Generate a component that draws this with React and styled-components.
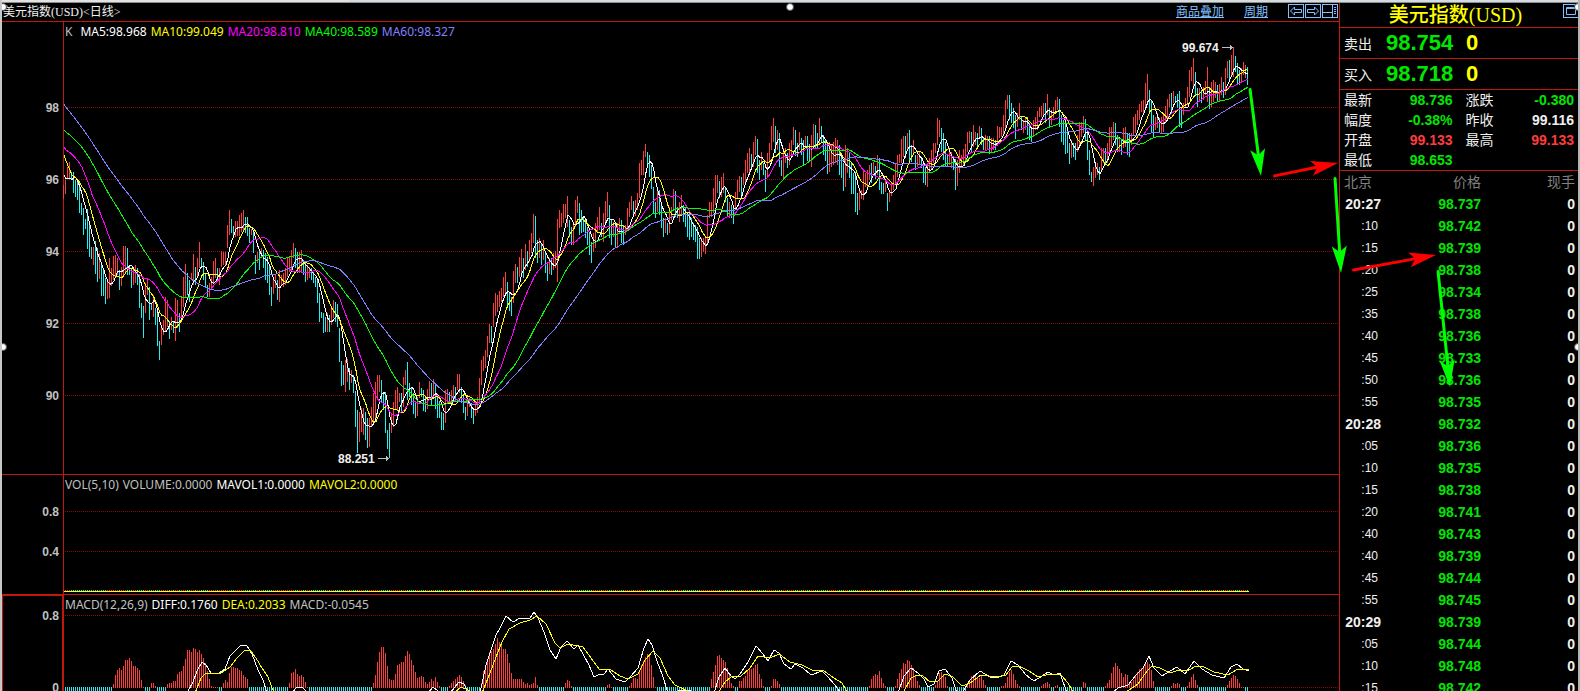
import React from 'react';
import styled, { createGlobalStyle } from 'styled-components';

const GlobalStyle = createGlobalStyle`
  * {
    box-sizing: border-box;
  }

  body {
    margin: 0;
    background: #000;
    overflow: hidden;
  }
`;

const theme = {
  line: '#c01810',
  grid: '#8c0c0c',
  up: '#ff3c3c',
  down: '#20f0f0',
  green: '#00e600',
  red: '#ff3c3c',
  white: '#f0f0f0',
  gray: '#c0c0c0',
  yellow: '#ffff00',
  magenta: '#ff00ff',
  lime: '#00ff00',
  violet: '#8080ff',
  link: '#80c0ff',
};

const cjk = '"Liberation Sans", "Noto Sans CJK SC", sans-serif';

/* ---------- data ---------- */

// Each row: x of the first bar, then "high-low" levels, one bar every 2px.
const CANDLES = [
  [63, '185-199 180-194 167-178 162-178 172-180 172-193 180-197 182-200 183-213 203-215'],
  [83, '208-235 219-229 209-249 225-257 247-259 247-265 241-274 248-282 253-279 265-296'],
  [103, '268-296 278-304 280-299 258-298 268-286 256-280 255-277 258-275 270-290 267-286'],
  [123, '246-275 246-272 248-275 266-275 268-288 267-285 265-283 268-285 275-308 303-318'],
  [143, '306-338 283-313 278-295 287-320 303-310 295-317 308-325 313-346 341-360 328-345'],
  [163, '320-335 297-332 300-327 321-339 317-330 322-333 298-341 300-328 313-332 298-317'],
  [183, '277-307 264-298 273-295 280-302 273-280 254-285 267-285 258-277 242-268 258-268'],
  [203, '262-280 273-287 285-297 283-297 277-288 261-283 258-278 268-280 268-285 251-267'],
  [223, '252-265 252-265 225-248 210-235 219-233 226-237 221-237 221-236 215-236 213-232'],
  [243, '210-230 217-233 217-236 228-243 229-235 232-253 255-274 252-263 250-270 248-258'],
  [263, '250-268 253-280 257-283 265-295 287-306 278-294 275-288 280-300 270-302 275-285'],
  [283, '273-287 268-285 258-277 257-272 250-270 243-258 248-268 252-273 252-273 250-273'],
  [303, '260-275 263-282 265-280 267-278 268-280 272-283 277-287 280-303 293-322 312-318'],
  [323, '313-333 317-332 313-332 315-332 308-325 300-318 302-322 304-327 328-362 361-386'],
  [343, '365-385 360-392 359-382 368-390 370-383 375-393 391-427 410-453 412-442 408-432'],
  [363, '408-435 412-440 418-448 418-447 407-427 393-422 382-420 375-398 375-392 380-402'],
  [383, '392-410 392-433 430-449 423-458 415-433 402-427 390-410 387-410 393-402 393-413'],
  [403, '377-407 370-385 362-400 383-397 387-405 393-414 403-418 397-416 382-398 388-397'],
  [423, '390-411 397-412 389-409 381-400 383-405 379-397 385-409 397-418 401-418 412-430'],
  [443, '413-430 390-423 389-403 392-402 390-403 385-397 387-400 374-390 374-393 387-403'],
  [463, '395-413 407-420 397-416 398-407 403-418 408-424 405-416 397-413 378-403 360-385'],
  [483, '356-371 350-368 336-357 324-343 326-343 303-327 293-316 295-312 291-307 288-302'],
  [503, '277-297 272-293 282-308 293-311 297-316 271-303 264-283 267-283 257-277 249-273'],
  [523, '258-278 244-270 251-267 240-262 233-253 214-243 216-258 240-263 238-258 243-265'],
  [543, '240-260 253-273 263-281 258-274 258-275 253-270 251-268 219-282 210-228 213-227'],
  [563, '204-223 204-218 196-227 220-237 227-245 225-245 200-227 196-213 203-235 210-233'],
  [583, '216-232 218-238 227-245 232-255 242-263 233-252 223-248 217-233 207-230 223-237'],
  [603, '213-242 201-222 192-217 205-238 220-245 222-237 225-247 223-248 218-233 220-243'],
  [623, '225-245 225-235 208-230 202-217 196-210 201-217 200-216 193-210 163-198 160-175'],
  [643, '151-175 144-157 152-168 155-177 165-189 187-213 202-218 190-212 190-215 203-228'],
  [663, '218-237 218-233 223-235 207-233 207-220 189-210 191-217 207-218 202-222 195-215'],
  [683, '205-222 207-227 213-237 213-240 218-237 223-240 225-242 227-259 238-259 238-257'],
  [703, '238-252 238-254 215-245 202-218 202-217 188-213 175-205 175-193 181-198 177-197'],
  [723, '173-193 187-202 198-217 202-218 205-218 208-224 192-210 180-198 176-192 177-198'],
  [743, '173-185 160-183 153-173 148-172 154-168 142-167 136-155 139-173 160-180 152-170'],
  [763, '163-175 170-192 153-178 143-163 126-150 118-142 126-153 130-150 133-167 160-176'],
  [783, '148-179 148-163 153-168 143-165 140-158 127-145 130-156 143-157 132-150 138-155'],
  [803, '140-165 136-148 136-161 144-162 135-167 124-148 125-148 133-148 118-143 126-143'],
  [823, '135-155 139-161 143-174 142-172 145-167 142-165 138-163 140-165 145-175 157-178'],
  [843, '163-191 145-187 148-173 153-178 162-194 173-194 172-212 193-215 188-210 190-199'],
  [863, '170-200 173-187 170-187 165-180 163-183 162-173 166-179 155-175 158-190 182-194'],
  [883, '183-194 180-192 193-211 191-202 183-196 175-190 163-185 155-177 154-163 139-163'],
  [903, '136-157 136-158 133-150 130-160 145-162 140-155 155-170 155-167 152-165 158-168'],
  [923, '162-183 167-185 163-187 158-173 150-170 143-163 143-153 118-145 120-137 128-152'],
  [943, '133-160 142-167 155-166 152-165 152-168 157-170 159-190 160-186 150-173 155-168'],
  [963, '149-165 144-160 132-152 131-143 132-152 125-147 132-145 133-147 126-138 128-145'],
  [983, '137-150 135-150 136-150 136-154 138-152 138-150 140-150 126-146 127-138 127-137'],
  [1003, '115-135 100-130 95-109 95-120 103-123 108-128 115-139 113-127 103-120 117-130'],
  [1023, '120-133 118-130 117-135 123-140 127-142 120-137 117-130 111-130 107-117 106-117'],
  [1043, '103-115 103-123 94-115 108-127 110-125 107-118 100-113 97-110 99-127 115-142'],
  [1063, '120-145 123-154 130-153 143-164 140-158 143-157 143-160 135-152 122-145 122-137'],
  [1083, '116-133 119-140 130-160 150-175 172-182 167-186 167-178 163-175 167-180 148-170'],
  [1103, '148-163 148-165 143-163 127-152 127-147 122-140 123-145 135-152 138-152 140-155'],
  [1123, '128-148 127-147 133-155 133-157 133-145 117-135 114-133 110-125 104-120 101-112'],
  [1143, '100-113 83-108 74-100 90-112 100-132 115-137 117-130 113-128 118-133 117-133'],
  [1163, '115-132 106-123 99-117 94-107 93-113 91-103 96-103 94-108 91-127 107-128'],
  [1183, '103-115 98-108 87-105 70-97 67-81 58-87 72-95 88-107 88-102 90-103'],
  [1203, '87-100 81-95 67-102 88-109 82-107 80-102 82-98 85-102 84-102 77-95'],
  [1223, '82-98 68-95 61-78 60-80 55-75 47-77 56-72 63-85 70-85 68-82'],
  [1243, '62-75 65-78 67-85'],
];

const bars = CANDLES.flatMap(([start, row]) =>
  row.split(' ').map((pair, i) => {
    const [high, low] = pair.split('-').map(Number);
    return { x: start + i * 2, high, low, mid: (high + low) / 2 };
  })
);

bars.forEach((bar, i) => {
  const prev = i ? bars[i - 1].mid : bar.mid + 1;
  bar.up = bar.mid <= prev + (i % 3 === 0 ? 3 : 0);
});

// Levels before the first visible bar, needed by the long averages.
const history = [
  ...Array.from({ length: 20 }, (_, i) => 10 + i * 4),
  ...Array.from({ length: 20 }, (_, i) => 106 + i / 2),
  ...Array(10).fill(142),
  ...Array(5).fill(125),
  ...Array(5).fill(171),
];

const closes = [...history, ...bars.map((bar) => bar.mid)];

const average = (size) =>
  bars
    .map((bar, i) => {
      const end = history.length + i + 1;
      const sum = closes.slice(end - size, end).reduce((a, b) => a + b, 0);
      return `${bar.x + 1},${Math.round((sum / size) * 10) / 10}`;
    })
    .join(' ');

const AVERAGES = [
  { name: 'MA5', value: '98.968', size: 5, color: '#fff' },
  { name: 'MA10', value: '99.049', size: 10, color: theme.yellow },
  { name: 'MA20', value: '98.810', size: 20, color: theme.magenta },
  { name: 'MA40', value: '98.589', size: 40, color: theme.lime },
  { name: 'MA60', value: '98.327', size: 60, color: theme.violet },
];

// Positive runs of the MACD histogram: first x, then heights.
const HISTOGRAM = [
  [113, [3, 12, 17, 19, 17, 21, 27, 27, 29, 26, 21, 21, 19, 17, 7, 0]],
  [151, [4, 4, 1]],
  [167, [3, 4, 4, 6, 6, 13, 15, 16, 21, 28, 37, 37, 35, 39, 38, 35, 37, 33, 29, 24, 16, 8, 1, 0, 0, 0]],
  [223, [4, 7, 5, 14, 20, 20, 19, 19, 17, 16, 12, 10, 8]],
  [289, [4, 14, 15, 18, 13, 11, 12, 10, 5, 0]],
  [373, [4, 12, 25, 35, 40, 40, 34, 21, 8, 7, 7, 13, 22, 23, 25, 25, 31, 36, 33, 27, 22, 15, 9, 10, 11, 10, 5, 3, 5, 8, 6, 10, 5, 1]],
  [449, [1, 4, 6, 8, 10, 12, 10, 6, 2]],
  [481, [4, 16, 21, 28, 35, 36, 38, 43, 49, 45, 42, 38, 38, 33, 24, 14, 8, 8, 8, 8, 8, 5, 3, 4, 2, 3, 4, 10, 2]],
  [565, [4, 7, 6, 1]],
  [607, [2, 3, 0]],
  [629, [1, 4, 9, 9, 8, 15, 22, 26, 30, 33, 32, 22, 10, 0]],
  [711, [8, 15, 22, 31, 32, 29, 27, 25, 19, 12, 4, 1]],
  [739, [6, 6, 9, 11, 16, 18, 18, 19, 22, 23, 13, 8, 1]],
  [771, [1, 8, 8, 6, 3]],
  [869, [1, 8, 11, 13, 12, 16, 9, 4, 1]],
  [895, [1, 8, 14, 18, 24, 23, 27, 26, 22, 19, 11, 6, 2]],
  [935, [2, 6, 14, 15, 13, 10, 1]],
  [967, [3, 7, 11, 12, 13, 10, 9, 11, 7, 2]],
  [1001, [1, 1, 4, 10, 15, 17, 13, 7, 3, 1]],
  [1041, [1, 3, 4, 5, 3]],
  [1055, [1, 2]],
  [1083, [5, 4]],
  [1105, [1, 4, 7, 14, 20, 24, 21, 18, 14, 10, 13, 12, 5, 5, 7, 12, 15, 18, 19, 20, 23, 25, 23, 17, 6]],
  [1171, [1, 4, 3, 4, 3]],
  [1187, [1, 5, 10, 13, 7, 2]],
  [1227, [2, 6, 9, 12, 11, 8, 4, 0, 0]],
];

const positive = new Map(
  HISTOGRAM.flatMap(([start, heights]) => heights.map((h, i) => [start + i * 2, h]))
);

const DIFF = [
  '187,693 193,682 197,671 202,662 206,665 211,673 219,673 225,669 230,656 236,650 241,645 247,646 252,654 258,670 263,680 267,693',
  '292,693 296,688 302,687 308,693',
  '428,693 433,687 437,690 440,693',
  '450,693 459,682 464,684 468,693',
  '480,693 486,665 491,650 496,635 500,628 506,616 513,622 520,618 530,618 534,612 538,618 544,632 550,650 556,659 561,647 567,641 574,649 578,645 584,656 589,665 594,677 600,674 604,674 608,669 616,679 625,682 631,676 638,668 644,648 648,639 652,645 657,661 662,674 668,693',
  '675,692 682,690 690,690 694,693',
  '714,693 719,677 725,668 731,676 735,679 740,674 748,662 756,646 763,654 768,661 774,650 779,653 784,664 791,669 795,664 803,668 811,675 822,671 828,677 834,684 841,693',
  '898,693 904,676 911,668 918,673 924,679 928,687 934,684 939,671 945,669 952,678 957,693',
  '962,693 970,680 980,671 990,677 996,678 1004,675 1011,661 1018,665 1026,675 1034,681 1042,676 1048,672 1054,675 1060,673 1067,693',
  '1113,692 1118,688 1128,685 1136,675 1143,668 1149,656 1154,668 1162,676 1170,671 1177,667 1185,674 1194,661 1202,669 1212,675 1224,678 1231,667 1237,664 1243,669 1249,671',
];

const DEA = [
  '195,693 201,678 206,673 221,673 230,667 237,658 245,650 250,650 256,658 262,668 268,677 274,693',
  '454,693 461,687 468,690 474,693',
  '482,693 490,673 496,657 502,642 509,629 520,623 530,620 537,616 546,624 555,643 560,648 568,644 583,647 591,658 599,669 611,670 620,676 628,679 638,674 645,660 653,651 660,658 668,676 675,685 690,692',
  '718,693 725,682 731,677 741,676 750,668 758,656 770,658 779,654 790,662 802,665 812,670 824,671 834,678 842,683 848,693',
  '903,693 911,678 917,675 923,676 930,682 938,681 945,674 953,677 962,686 970,683 981,675 997,677 1006,675 1012,667 1019,666 1029,671 1038,677 1050,674 1061,675 1068,683 1074,693',
  '1126,692 1138,684 1147,671 1152,666 1160,668 1170,673 1179,670 1189,670 1196,666 1204,667 1214,672 1228,675 1236,670 1249,669',
];

const QUOTES = [
  ['最新', '98.736', 'green', '涨跌', '-0.380', 'green'],
  ['幅度', '-0.38%', 'green', '昨收', '99.116', 'white'],
  ['开盘', '99.133', 'red', '最高', '99.133', 'red'],
  ['最低', '98.653', 'green'],
];

const TICKS = [
  ['20:27', '98.737'],
  [':10', '98.742'],
  [':15', '98.739'],
  [':20', '98.738'],
  [':25', '98.734'],
  [':35', '98.738'],
  [':40', '98.736'],
  [':45', '98.733'],
  [':50', '98.736'],
  [':55', '98.735'],
  ['20:28', '98.732'],
  [':05', '98.736'],
  [':10', '98.735'],
  [':15', '98.738'],
  [':20', '98.741'],
  [':40', '98.743'],
  [':40', '98.739'],
  [':45', '98.744'],
  [':55', '98.745'],
  ['20:29', '98.739'],
  [':05', '98.744'],
  [':10', '98.748'],
  [':15', '98.742'],
];

/* ---------- layout ---------- */

const Window = styled.div`
  position: relative;
  display: flex;
  flex-direction: column;
  height: 100vh;
  overflow: hidden;
  background: #000;
  color: ${theme.white};
  font-family: ${cjk};
  border-left: 2px solid #c8c8c8;
  border-right: 2px solid #b4b4b4;
`;

const TopEdge = styled.div`
  flex: none;
  height: 3px;
  background: linear-gradient(90deg, #e2e2e2 0 22%, #d4dce2 22% 100%);
  border-bottom: 1px solid #8c8c8c;
`;

const Workspace = styled.div`
  flex: 1;
  min-height: 0;
  display: grid;
  grid-template-columns: minmax(0, 1fr) 239px;
`;

const Charts = styled.main`
  display: flex;
  flex-direction: column;
  min-height: 0;
`;

const TitleBar = styled.header`
  flex: none;
  display: flex;
  align-items: center;
  height: 19px;
  padding: 0 1px;
  border-bottom: 1px solid ${theme.line};
  font-family: 'Liberation Serif', 'Noto Sans CJK SC', serif;
  font-size: 12px;
  line-height: 18px;
`;

const ChartName = styled.h1`
  flex: 1;
  margin: 0;
  font-size: 12px;
  font-weight: 400;
`;

const BarLink = styled.a`
  margin-right: 20px;
  color: ${theme.link};
  text-decoration: underline;
`;

const IconButtons = styled.div`
  display: flex;
  gap: 1px;
  padding-bottom: 2px;
`;

const IconButton = styled.button`
  display: block;
  width: 16px;
  height: 14px;
  padding: 0;
  border: 1px solid ${theme.link};
  background: none;
  color: ${theme.link};

  svg {
    display: block;
  }
`;

const Panel = styled.section`
  display: grid;
  grid-template-columns: 62px minmax(0, 1fr);
  flex: ${({ $height }) => ($height ? `0 0 ${$height}px` : '1 1 0')};
  min-height: 0;
  border-bottom: ${({ $height }) => ($height ? `1px solid ${theme.line}` : 0)};
`;

const Axis = styled.svg`
  display: block;
  width: 100%;
  height: 100%;
  border: solid ${theme.line};
  border-width: ${({ $active }) => ($active ? '1px 2px 0 1px' : '0 1px 0 0')};
`;

const Plot = styled.div`
  display: flex;
  flex-direction: column;
  min-height: 0;
`;

const Legend = styled.div`
  display: flex;
  flex: none;
  gap: 4px;
  height: 18px;
  padding-left: 1px;
  font-family: 'Noto Sans', sans-serif;
  font-size: 12px;
  line-height: 19px;
  white-space: nowrap;
`;

const LegendItem = styled.span`
  color: ${({ $color }) => $color || theme.gray};
  margin-right: ${({ $wide }) => ($wide ? '4px' : 0)};
`;

const Canvas = styled.svg`
  display: block;
  flex: 1;
  width: 100%;
  min-height: 0;
  overflow: visible;
`;

const Label = styled.text`
  fill: ${({ $bright }) => ($bright ? theme.white : theme.gray)};
  font-family: 'Liberation Sans', sans-serif;
  font-size: 12px;
  font-weight: 700;
`;

const Sidebar = styled.aside`
  min-height: 0;
  overflow: hidden;
  border-left: 1px solid ${theme.line};
`;

const SideTitle = styled.header`
  display: grid;
  grid-template-columns: 8px 1fr 15px;
  align-items: start;
  height: 25px;
  padding-top: 1px;
  border-bottom: 1px solid ${theme.line};
`;

const Symbol = styled.h2`
  grid-column: 2;
  margin: 0;
  color: ${theme.yellow};
  font-family: 'Liberation Serif', 'Noto Sans CJK SC', serif;
  font-size: 20px;
  font-weight: 500;
  line-height: 22px;
  text-align: center;
  white-space: nowrap;
`;

const PriceRow = styled.div`
  display: grid;
  grid-template-columns: 42px 80px 1fr;
  align-items: center;
  height: 31px;
  padding-left: 4px;
  border-bottom: 1px solid ${theme.line};
  font-size: 14px;
`;

const BigNumber = styled.strong`
  color: ${({ $color }) => theme[$color]};
  font-size: 22px;
  line-height: 30px;
`;

const Quotes = styled.dl`
  display: grid;
  grid-template-columns: 28px 1fr 41px 1fr;
  margin: 0;
  padding: 0 4px;
  border-bottom: 1px solid ${theme.line};
  font-size: 14px;
  line-height: 20px;
`;

const QuoteLabel = styled.dt`
  height: 20px;
  padding-left: ${({ $second }) => ($second ? '13px' : 0)};
`;

const QuoteValue = styled.dd`
  height: 20px;
  margin: 0;
  color: ${({ $color }) => theme[$color]};
  font-weight: 700;
  text-align: right;
`;

const Tape = styled.table`
  width: 100%;
  border-collapse: collapse;
  table-layout: fixed;
  font-size: 14px;
  line-height: 22px;

  tr {
    height: 22px;
  }

  th {
    padding: 0;
    color: #808080;
    font-weight: 400;
    text-align: right;
  }

  td {
    height: 22px;
    padding: 0;
    font-weight: 700;
    text-align: right;
  }

  th:first-child {
    width: 42px;
    padding-left: 4px;
    text-align: left;
  }

  th:last-child,
  td:last-child {
    width: 97px;
    padding-right: 3px;
  }
`;

const Time = styled.td`
  && {
    padding-right: ${({ $minor }) => ($minor ? '4px' : '1px')};
    font-size: ${({ $minor }) => ($minor ? '12px' : '14px')};
    font-weight: ${({ $minor }) => ($minor ? 400 : 700)};
  }
`;

const TickPrice = styled.td`
  color: ${theme.green};
`;

const Overlay = styled.svg`
  position: absolute;
  inset: 0;
  width: 100%;
  height: 100%;
  pointer-events: none;
`;

const Handle = styled.i`
  position: absolute;
  top: ${({ $top }) => $top};
  left: ${({ $left }) => $left};
  width: 8px;
  height: 8px;
  margin: -4px;
  border: 1px solid #505050;
  border-radius: 50%;
  background: #fff;
`;

/* ---------- drawings ---------- */

const Grid = ({ levels }) =>
  levels.map((y) => (
    <line key={y} x1="1" x2="100%" y1={y + 0.5} y2={y + 0.5} stroke={theme.grid} strokeDasharray="1 1" />
  ));

const AxisLabels = ({ labels, active }) => (
  <Axis $active={active}>
    {labels.map(([y, text]) => (
      <Label key={y} x={active ? 56 : 57} y={y} textAnchor="end">
        {text}
      </Label>
    ))}
  </Axis>
);

const Pointer = ({ x, y }) => (
  <path d={`M${x} ${y}h11M${x + 8.5} ${y - 2.5}v5M${x + 9.5} ${y - 1.5}v3`} stroke={theme.gray} fill="none" />
);

const Lines = ({ paths, color }) =>
  paths.map((points) => (
    <polyline key={points} points={points} fill="none" stroke={color} shapeRendering="crispEdges" />
  ));

const PriceChart = () => (
  <Canvas>
    <Grid levels={[67, 139, 211, 283, 355]} />
    <g transform="translate(-64 -40)">
      <g shapeRendering="crispEdges">
        {bars.map((bar) => (
          <rect
            key={bar.x}
            x={bar.x}
            y={bar.high}
            width="1"
            height={bar.low - bar.high}
            fill={bar.up ? theme.up : theme.down}
          />
        ))}
      </g>
      {AVERAGES.map((ma) => (
        <Lines key={ma.name} paths={[average(ma.size)]} color={ma.color} />
      ))}
      <Label $bright x="1182" y="52">
        99.674
      </Label>
      <Pointer x={1222} y={47.5} />
      <Label $bright x="338" y="463">
        88.251
      </Label>
      <Pointer x={378} y={458.5} />
    </g>
  </Canvas>
);

const VolumeChart = () => (
  <Canvas>
    <Grid levels={[18, 58]} />
    <g transform="translate(-64 -493)" shapeRendering="crispEdges">
      {bars.map((bar) => (
        <rect key={bar.x} x={bar.x} y="590" width="1" height="1" fill={bar.up ? theme.up : theme.down} />
      ))}
      <rect x="64" y="591" width="1185" height="1" fill={theme.yellow} />
    </g>
  </Canvas>
);

const MacdChart = () => (
  <Canvas>
    <Grid levels={[2, 74]} />
    <g transform="translate(-64 -613)">
      <g shapeRendering="crispEdges">
        {bars.slice(1).map(({ x }) => {
          const h = positive.get(x);
          return h === undefined ? (
            <rect key={x} x={x} y="687" width="1" height="6" fill={theme.down} />
          ) : (
            <rect key={x} x={x} y={687 - h} width="1" height={h + 1} fill={theme.up} />
          );
        })}
      </g>
      <Lines paths={DIFF} color="#fff" />
      <Lines paths={DEA} color={theme.yellow} />
    </g>
  </Canvas>
);

const Arrow = ({ from, to, color }) => {
  const length = Math.hypot(to[0] - from[0], to[1] - from[1]);
  const angle = (Math.atan2(to[1] - from[1], to[0] - from[0]) * 180) / Math.PI;
  return (
    <g transform={`translate(${from[0]} ${from[1]}) rotate(${angle})`} fill={color}>
      <rect x="-1" y="-1.5" width={length - 18} height="3" rx="1.5" />
      <path d={`M${length} 0L${length - 27} 7.5L${length - 21} 0L${length - 27} -7.5Z`} />
    </g>
  );
};

const BlockArrow = ({ flip }) => (
  <svg width="14" height="12" viewBox="0 0 14 12" fill="none" stroke="currentColor">
    <path transform={flip ? 'matrix(-1 0 0 1 14 0)' : undefined} d="M1.5 6L5.5 2V4.5H12.5V7.5H5.5V10Z" />
  </svg>
);

const SplitIcon = () => (
  <svg width="14" height="12" viewBox="0 0 14 12" fill="none" stroke="currentColor">
    <path d="M0 7.5H9M9.5 0V12M11 2.5H13M11 4.5H13M11 6.5H13M11 8.5H13" />
  </svg>
);

const RestoreIcon = () => (
  <svg width="14" height="12" viewBox="0 0 14 12" fill="none" stroke="currentColor">
    <path d="M2.5 2.5H11.5V9.5H2.5ZM2 3.5H12" />
  </svg>
);

/* ---------- page ---------- */

const App = () => (
  <Window>
    <GlobalStyle />
    <TopEdge />
    <Workspace>
      <Charts>
        <TitleBar>
          <ChartName>美元指数(USD)&lt;日线&gt;</ChartName>
          <BarLink href="#overlay">商品叠加</BarLink>
          <BarLink href="#period">周期</BarLink>
          <IconButtons>
            <IconButton aria-label="Previous">
              <BlockArrow />
            </IconButton>
            <IconButton aria-label="Next">
              <BlockArrow flip />
            </IconButton>
            <IconButton aria-label="Split view">
              <SplitIcon />
            </IconButton>
          </IconButtons>
        </TitleBar>

        <Panel $height={453}>
          <AxisLabels labels={[[90, '98'], [162, '96'], [234, '94'], [306, '92'], [378, '90']]} />
          <Plot>
            <Legend>
              <LegendItem $wide>K</LegendItem>
              {AVERAGES.map((ma) => (
                <LegendItem key={ma.name} $color={ma.color}>
                  {ma.name}:{ma.value}
                </LegendItem>
              ))}
            </Legend>
            <PriceChart />
          </Plot>
        </Panel>

        <Panel $height={120}>
          <AxisLabels labels={[[41, '0.8'], [81, '0.4']]} />
          <Plot>
            <Legend>
              <LegendItem>VOL(5,10)</LegendItem>
              <LegendItem>VOLUME:0.0000</LegendItem>
              <LegendItem $color="#fff">MAVOL1:0.0000</LegendItem>
              <LegendItem $color={theme.yellow}>MAVOL2:0.0000</LegendItem>
            </Legend>
            <VolumeChart />
          </Plot>
        </Panel>

        <Panel>
          <AxisLabels active labels={[[24, '0.8'], [96, '0']]} />
          <Plot>
            <Legend>
              <LegendItem>MACD(12,26,9)</LegendItem>
              <LegendItem $color="#fff">DIFF:0.1760</LegendItem>
              <LegendItem $color={theme.yellow}>DEA:0.2033</LegendItem>
              <LegendItem>MACD:-0.0545</LegendItem>
            </Legend>
            <MacdChart />
          </Plot>
        </Panel>
      </Charts>

      <Sidebar>
        <SideTitle>
          <Symbol>美元指数(USD)</Symbol>
          <IconButton aria-label="Restore">
            <RestoreIcon />
          </IconButton>
        </SideTitle>
        <PriceRow>
          <span>卖出</span>
          <BigNumber $color="green">98.754</BigNumber>
          <BigNumber $color="yellow">0</BigNumber>
        </PriceRow>
        <PriceRow>
          <span>买入</span>
          <BigNumber $color="green">98.718</BigNumber>
          <BigNumber $color="yellow">0</BigNumber>
        </PriceRow>
        <Quotes>
          {QUOTES.map(([label, value, color, label2, value2, color2]) => (
            <React.Fragment key={label}>
              <QuoteLabel>{label}</QuoteLabel>
              <QuoteValue $color={color}>{value}</QuoteValue>
              {label2 && <QuoteLabel $second>{label2}</QuoteLabel>}
              {label2 && <QuoteValue $color={color2}>{value2}</QuoteValue>}
            </React.Fragment>
          ))}
        </Quotes>
        <Tape>
          <thead>
            <tr>
              <th>北京</th>
              <th>价格</th>
              <th>现手</th>
            </tr>
          </thead>
          <tbody>
            {TICKS.map(([time, price], i) => (
              <tr key={i}>
                <Time $minor={time.startsWith(':')}>{time}</Time>
                <TickPrice>{price}</TickPrice>
                <td>0</td>
              </tr>
            ))}
          </tbody>
        </Tape>
      </Sidebar>
    </Workspace>

    <Overlay>
      <Arrow from={[1248, 89]} to={[1259, 176]} color={theme.lime} />
      <Arrow from={[1272, 176]} to={[1336, 163]} color="#f00" />
      <Arrow from={[1333, 178]} to={[1339, 273]} color={theme.lime} />
      <Arrow from={[1351, 270]} to={[1434, 255]} color="#f00" />
      <Arrow from={[1436, 271]} to={[1448, 387]} color={theme.lime} />
    </Overlay>
    <Handle $top="7px" $left="1px" />
    <Handle $top="7px" $left="50%" />
    <Handle $top="7px" $left="100%" />
    <Handle $top="347px" $left="1px" />
    <Handle $top="347px" $left="100%" />
  </Window>
);

export default App;
